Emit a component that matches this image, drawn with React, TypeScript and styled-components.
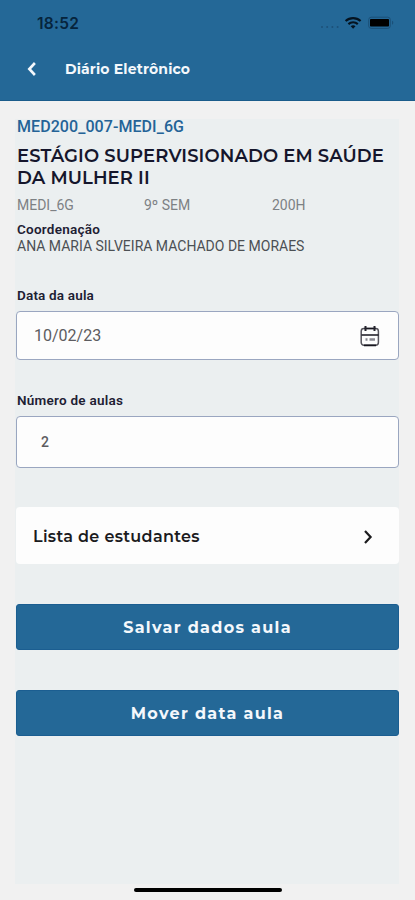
import React from "react";
import styled, { createGlobalStyle } from "styled-components";

const GlobalStyle = createGlobalStyle`
  * { box-sizing: border-box; }
  body { margin: 0; background: #f1f1f1; }
`;

const display = `Montserrat, Inter, "Open Sans", sans-serif`;
const body = `Roboto, "Liberation Sans", sans-serif`;

const Screen = styled.div`
  width: 415px;
  height: 900px;
  display: flex;
  flex-direction: column;
  background: #f1f1f1;
  font-family: ${body};
  overflow: hidden;
`;

const Header = styled.header`
  height: 101px;
  flex: none;
  background: #246897;
  border-bottom: 1px solid #1b5c8b;
`;

const StatusBar = styled.div`
  height: 46px;
  padding: 0 20px 0 37px;
  display: flex;
  align-items: center;
  justify-content: space-between;
`;

const Clock = styled.span`
  padding-top: 2px;
  font: 600 15.5px/20px Inter, sans-serif;
  letter-spacing: 0.3px;
  color: #06243c;
`;

const NavBar = styled.div`
  height: 46px;
  padding-left: 26px;
  display: flex;
  align-items: center;
`;

const BackButton = styled.button`
  width: 39px;
  height: 20px;
  padding: 0;
  border: 0;
  background: none;
  display: flex;
`;

const NavTitle = styled.h1`
  margin: 0;
  font: 700 14px/20px ${display};
  letter-spacing: 0.15px;
  color: #f4f8fc;
`;

const Panel = styled.main`
  margin: 18px 16px 0 15px;
  padding-left: 2px;
  height: 765px;
  flex: none;
  display: flex;
  flex-direction: column;
  background: #ebeff0;
`;

const CourseCode = styled.div`
  margin-top: -2px;
  font: 500 16px/20px ${body};
  letter-spacing: 0.07px;
  color: #246397;
`;

const CourseName = styled.h2`
  margin: 8px 0 0;
  font: 600 18px/22px ${display};
  letter-spacing: 0.1px;
  white-space: nowrap;
  color: #15162c;
`;

const Facts = styled.div`
  margin-top: 7px;
  display: grid;
  grid-template-columns: 127px 128px 1fr;
  font: 400 14px/18px ${body};
  color: #7d8184;
`;

const Label = styled.div<{ $top: number; $tracking?: number }>`
  margin-top: ${(p) => p.$top}px;
  font: 600 13.5px/16px ${body};
  letter-spacing: ${(p) => p.$tracking ?? 0}px;
  color: #1d2033;
`;

const Coordinator = styled.div`
  font: 400 14px/18px ${body};
  white-space: nowrap;
  color: #4c5054;
`;

const Field = styled.div<{ $top: number; $height: number; $inset: number }>`
  margin: ${(p) => p.$top}px 0 0 -1px;
  height: ${(p) => p.$height}px;
  padding: 0 18px 0 ${(p) => p.$inset}px;
  display: flex;
  align-items: center;
  justify-content: space-between;
  border: 1px solid #9aa6c0;
  border-radius: 4px;
  background: #fdfdfd;
`;

const FieldValue = styled.span<{ $size: number; $weight?: number }>`
  font: ${(p) => p.$weight ?? 400} ${(p) => p.$size}px/20px ${body};
  color: #5c5c60;
`;

const ListLink = styled.a`
  margin: 39px 0 0 -1px;
  height: 57px;
  padding: 2px 26px 0 17px;
  display: flex;
  align-items: center;
  justify-content: space-between;
  border-radius: 4px;
  background: #fdfdfd;
  font: 600 16px/20px ${display};
  letter-spacing: 0.33px;
  color: #1b1b1d;
`;

const ActionButton = styled.button`
  margin: 40px 0 0 -1px;
  height: 46px;
  flex: none;
  padding: 2px 0 0;
  border: 1px solid #1b5e91;
  border-radius: 3px;
  background: #246897;
  font: 700 16px/20px ${display};
  letter-spacing: 1.3px;
  color: #f4f8fc;
`;

const HomeIndicator = styled.div`
  width: 148px;
  height: 4px;
  margin: 4px 0 0 134px;
  border-radius: 2px;
  background: #000;
`;

const StatusIcons = () => (
  <svg width="75" height="16" viewBox="0 0 75 16">
    <g fill="#1d5179">
      <circle cx="2" cy="12" r="1" />
      <circle cx="7.2" cy="12" r="1" />
      <circle cx="12.4" cy="12" r="1" />
      <circle cx="17.6" cy="12" r="1" />
    </g>
    <g fill="none" stroke="#05131f" strokeWidth="2.1">
      <path d="M25.6 6.1a11 11 0 0 1 15 0" />
      <path d="M28.4 9.1a7 7 0 0 1 9.4 0" />
    </g>
    <path d="M30.7 11.3a3.6 3.6 0 0 1 4.8 0l-2.4 2.5z" fill="#05131f" />
    <rect x="48.7" y="2.2" width="21.6" height="11.2" rx="2.5" fill="none" stroke="#1b5078" />
    <rect x="50" y="4" width="19" height="7.6" rx="0.8" fill="#000" />
    <path d="M72 5.8v4c1.8-.8 1.8-3.200 0-4z" fill="#1b5078" />
  </svg>
);

const BackIcon = () => (
  <svg width="12" height="20" viewBox="0 0 12 20">
    <path d="M8.900 4 3.300 10l5.600 6" fill="none" stroke="#f4f8fc" strokeWidth="2.600" />
  </svg>
);

const CalendarIcon = () => (
  <svg width="20" height="22" viewBox="0 0 20 22">
    <rect x="1.200" y="3.500" width="17.200" height="16.800" rx="2.700" fill="none" stroke="#55545c" strokeWidth="1.500" />
    <path d="M4.500 3.500h11M1.500 10h17M4 20.300h12" stroke="#17161f" strokeWidth="1.700" />
    <path d="M5.500 1v5M14.500 1v5" stroke="#24232c" strokeWidth="2" />
    <path d="M5.500 14.500h2M9.500 14.500h5.500" stroke="#898991" strokeWidth="2.500" />
  </svg>
);

const ChevronIcon = () => (
  <svg width="10" height="16" viewBox="0 0 10 16">
    <path d="m2 2 5.600 6L2 14" fill="none" stroke="#1b1b1d" strokeWidth="2.200" />
  </svg>
);

export default function App() {
  return (
    <>
      <GlobalStyle />
      <Screen>
        <Header>
          <StatusBar>
            <Clock>18:52</Clock>
            <StatusIcons />
          </StatusBar>
          <NavBar>
            <BackButton aria-label="Voltar">
              <BackIcon />
            </BackButton>
            <NavTitle>Diário Eletrônico</NavTitle>
          </NavBar>
        </Header>
        <Panel>
          <CourseCode>MED200_007-MEDI_6G</CourseCode>
          <CourseName>
            ESTÁGIO SUPERVISIONADO EM SAÚDE
            <br />
            DA MULHER II
          </CourseName>
          <Facts>
            <span>MEDI_6G</span>
            <span>9º SEM</span>
            <span>200H</span>
          </Facts>
          <Label $top={7} $tracking={0.25}>Coordenação</Label>
          <Coordinator>ANA MARIA SILVEIRA MACHADO DE MORAES</Coordinator>
          <Label $top={32} $tracking={0.17}>Data da aula</Label>
          <Field $top={8} $height={49} $inset={17}>
            <FieldValue $size={16}>10/02/23</FieldValue>
            <CalendarIcon />
          </Field>
          <Label $top={32} $tracking={0.25}>Número de aulas</Label>
          <Field $top={8} $height={52} $inset={24}>
            <FieldValue $size={14} $weight={500}>2</FieldValue>
          </Field>
          <ListLink>
            Lista de estudantes
            <ChevronIcon />
          </ListLink>
          <ActionButton>Salvar dados aula</ActionButton>
          <ActionButton>Mover data aula</ActionButton>
        </Panel>
        <HomeIndicator />
      </Screen>
    </>
  );
}
